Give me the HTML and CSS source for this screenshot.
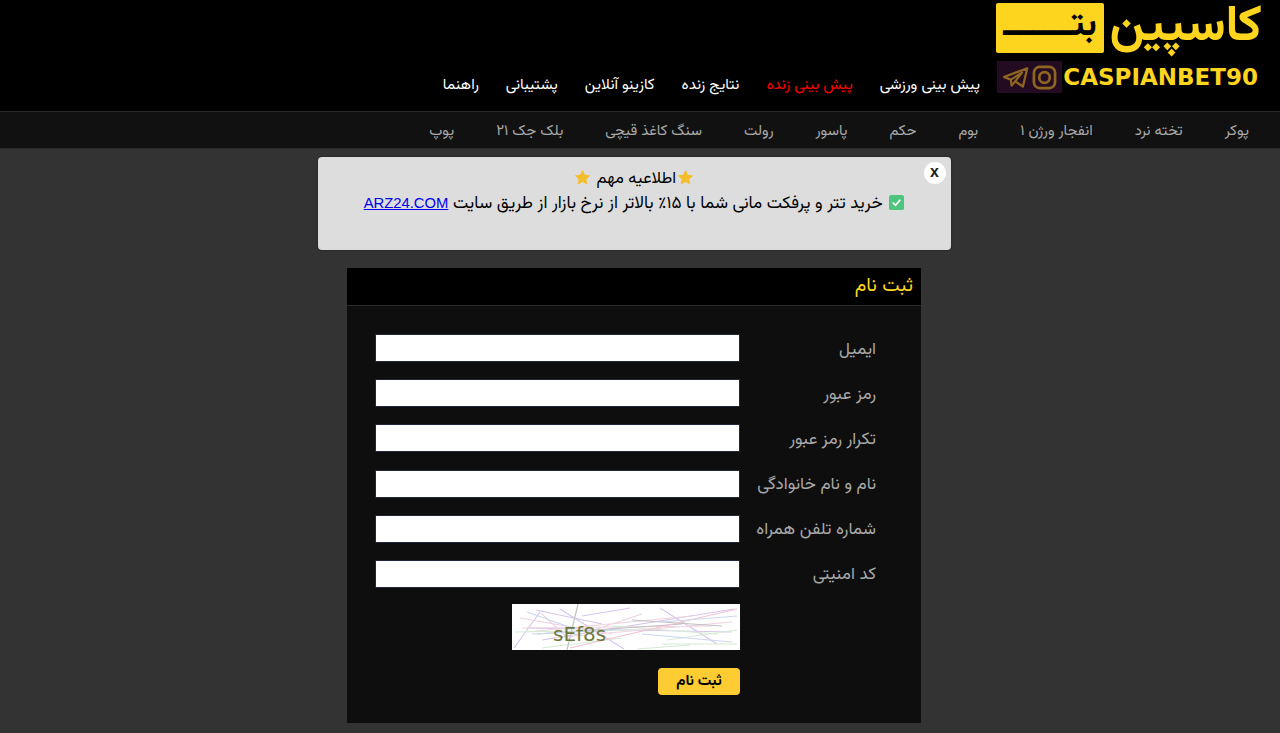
FILE: index.html
```html
<!DOCTYPE html>
<html lang="fa" dir="rtl">
<head>
<meta charset="utf-8">
<title>ثبت نام</title>
<link rel="stylesheet" href="styles.css">
</head>
<body>
<header class="top">
  <div class="logo">
    <div class="logo-row">
      <span class="logo-name">کاسپین</span>
      <span class="logo-box">بتـــــــ</span>
    </div>
    <div class="logo-row logo-row-low">
      <span class="logo-handle" dir="ltr">CASPIANBET90</span>
      <span class="logo-icons">
        <svg width="26" height="24" viewBox="0 0 30 26" fill="none" stroke="#8f6620" stroke-width="2.6" stroke-linejoin="round"><path d="M1 13 28 3 23 24 14 18 10 23 9 16Z"/><path d="M9 16 22 8 14 18"/></svg>
        <svg width="25" height="25" viewBox="0 0 26 26" fill="none" stroke="#8f6620" stroke-width="2.8"><rect x="2" y="2" width="22" height="22" rx="6"/><circle cx="13" cy="13" r="5.500"/></svg>
      </span>
    </div>
  </div>
  <nav class="main-nav">
    <a href="#">پیش بینی ورزشی</a>
    <a href="#" class="live">پیش بینی زنده</a>
    <a href="#">نتایج زنده</a>
    <a href="#">کازینو آنلاین</a>
    <a href="#">پشتیبانی</a>
    <a href="#">راهنما</a>
  </nav>
</header>
<nav class="sub-nav">
  <a href="#">پوکر</a>
  <a href="#">تخته نرد</a>
  <a href="#">انفجار ورژن ۱</a>
  <a href="#">بوم</a>
  <a href="#">حکم</a>
  <a href="#">پاسور</a>
  <a href="#">رولت</a>
  <a href="#">سنگ کاغذ قیچی</a>
  <a href="#">بلک جک ۲۱</a>
  <a href="#">پوپ</a>
</nav>
<div class="content">
<section class="notice">
  <span class="close">x</span>
  <p class="notice-title"><svg class="star" viewBox="0 0 24 24"><path d="M12 1l3.400 7 7.600 1-5.600 5.300 1.400 7.700L12 18.300 5.200 22l1.400-7.700L1 9l7.600-1z"/></svg>اطلاعیه مهم <svg class="star" viewBox="0 0 24 24"><path d="M12 1l3.400 7 7.600 1-5.600 5.300 1.400 7.700L12 18.300 5.200 22l1.400-7.700L1 9l7.600-1z"/></svg></p>
  <p class="notice-text"><svg class="check" viewBox="0 0 16 16"><rect width="16" height="16" rx="2" fill="#4fc47f"/><path d="M4 8l3 3 5-6" fill="none" stroke="#fff" stroke-width="1.800"/></svg> خرید تتر و پرفکت مانی شما با ۱۵٪ بالاتر از نرخ بازار از طریق سایت <a href="#" class="notice-link">ARZ24.COM</a></p>
</section>
<main class="card">
  <h1 class="card-title">ثبت نام</h1>
  <form class="form">
    <div class="row"><label>ایمیل</label><input type="text"></div>
    <div class="row"><label>رمز عبور</label><input type="text"></div>
    <div class="row"><label>تکرار رمز عبور</label><input type="text"></div>
    <div class="row"><label>نام و نام خانوادگی</label><input type="text"></div>
    <div class="row"><label>شماره تلفن همراه</label><input type="text"></div>
    <div class="row"><label>کد امنیتی</label><input type="text"></div>
    <div class="captcha-row">
      <svg class="captcha" width="228" height="46" viewBox="0 0 228 46" fill="none" stroke-width="1.200">
        <rect width="228" height="46" fill="#fff"/>
        <path d="M2 44 28 8M24 6 90 20M48 5 112 45M148 4 205 40M70 12 118 4M15 24 220 28M30 36 222 5" stroke="#d6c6ec"/>
        <path d="M10 24 200 22M15 28 180 12M40 34 220 18M8 14 100 30M30 10 60 38M70 30 130 10" stroke="#eed3e0"/>
        <path d="M3 28 120 26M155 36 225 26M30 44 110 34M125 45 178 41M100 22 205 30M150 40 225 40" stroke="#d5ecd5"/>
        <path d="M66 0 55 46M120 16 210 22M25 30 170 20" stroke="#c2c2c2"/>
        <path d="M58 44 225 5" stroke="#f4c2d0"/>
        <path d="M130 30 220 38M150 18 225 12M20 30 100 26M15 8 60 24" stroke="#c9d8f0"/>
        <text x="41" y="37" class="captcha-text">sEf8s</text>
      </svg>
    </div>
    <div class="submit-row"><button type="button" class="submit">ثبت نام</button></div>
  </form>
</main>
</div>
</body>
</html>
```

FILE: styles.css
```css
* { box-sizing: border-box; }
html, body { margin: 0; padding: 0; }
body {
  background: #333;
  font-family: "Vazirmatn", "Noto Sans Arabic", "DejaVu Sans", "Noto Sans", sans-serif;
  height: 733px;
  overflow: hidden;
}
a { text-decoration: none; }
p { margin: 0; }

.top {
  background: #000;
  height: 111px;
  display: flex;
  align-items: flex-start;
  padding-right: 18px;
}
.logo { flex: 0 0 266px; padding-top: 3px; }
.logo-row { display: flex; align-items: center; height: 50px; }
.logo-row-low { height: 32px; margin-top: 8px; }
.logo-name {
  color: #fdd41e;
  font-size: 50px;
  font-weight: 700;
  line-height: 50px;
  height: 50px;
  width: 158px;
  padding-left: 6px;
  text-align: center;
  white-space: nowrap;
}
.logo-box {
  background: #fdd41e;
  color: #000;
  border-radius: 2px;
  width: 108px;
  height: 50px;
  font-size: 36px;
  font-weight: 700;
  line-height: 46px;
  text-align: center;
  white-space: nowrap;
}
.logo-handle {
  color: #fdd41e;
  font-family: "DejaVu Sans", sans-serif;
  font-weight: 700;
  font-size: 23px;
  width: 200px;
  white-space: nowrap;
  padding-right: 4px;
  text-align: right;
}
.logo-icons {
  background: #230b22;
  width: 65px;
  height: 32px;
  display: flex;
  flex-direction: row-reverse;
  align-items: center;
  justify-content: center;
  gap: 3px;
}
.main-nav {
  display: flex;
  gap: 27px;
  margin-right: 16px;
  margin-top: 65px;
  height: 40px;
  align-items: center;
}
.main-nav a { color: #fff; font-size: 15.200px; white-space: nowrap; }
.main-nav a.live { color: #f00; }

.sub-nav {
  height: 38px;
  background: #111;
  border-top: 1px solid #2b2b2b;
  border-bottom: 1px solid #2b2b2b;
  display: flex;
  align-items: center;
  gap: 42px;
  padding-right: 31px;
  padding-top: 2px;
}
.sub-nav a { color: #a9a9a9; font-size: 14.850px; white-space: nowrap; }

.content { margin-right: 12px; }
.notice {
  position: relative;
  width: 633px;
  height: 93px;
  margin: 8px auto 0;
  background: #dddddd;
  border-radius: 4px;
  text-align: center;
  color: #000;
  padding: 10px 36px 0;
  box-shadow: 0 0 2px rgba(0,0,0,.5);
}
.notice-title { font-size: 16.500px; line-height: 24px; font-weight: 400; }
.notice-text { font-size: 17.100px; line-height: 25px; white-space: nowrap; }
.star { width: 17px; height: 17px; fill: #f4bd2a; vertical-align: -3px; margin: 0 1px; }
.check { width: 15px; height: 15px; vertical-align: -2px; margin-left: 2px; }
.notice-link { color: #0000ee; text-decoration: underline; font-family: "Liberation Sans", sans-serif; font-size: 14.800px; }
.close {
  position: absolute;
  top: 5px;
  right: 5px;
  width: 22px;
  height: 22px;
  border-radius: 50%;
  background: #fff;
  color: #222;
  font: 700 16px/20px "Liberation Sans", sans-serif;
  text-align: center;
}

.card {
  width: 574px;
  height: 455px;
  margin: 18px auto 0;
  background: #0e0e0e;
}
.card-title {
  margin: 0;
  height: 38px;
  background: #000;
  color: #fdd41e;
  font-size: 19.500px;
  font-weight: 400;
  line-height: 36px;
  padding-right: 8px;
  border-bottom: 1px solid #2a2a2a;
}
.form { padding-top: 28px; }
.row {
  display: flex;
  height: 28px;
  margin-bottom: 17.200px;
  align-items: center;
}
.row label {
  flex: 0 0 181px;
  padding-right: 45px;
  padding-top: 3px;
  color: #a9a9a9;
  font-size: 17px;
  white-space: nowrap;
}
.row input {
  flex: 0 0 365px;
  height: 28px;
  background: #fff;
  border: 1px solid #22263a;
  padding: 0 4px;
}
.captcha-row, .submit-row { display: flex; margin-right: 181px; }
.captcha-row { margin-top: -1px; height: 46px; }
.captcha { display: block; direction: ltr; }
.captcha-text { font-family: "DejaVu Sans", sans-serif; font-size: 20px; fill: #6d7a3e; stroke: none; }
.submit-row { margin-top: 18px; }
.submit {
  width: 82px;
  height: 27px;
  background: #fdcb32;
  border: 0;
  border-radius: 4px;
  color: #000;
  font-family: inherit;
  font-weight: 700;
  font-size: 15px;
}
```
